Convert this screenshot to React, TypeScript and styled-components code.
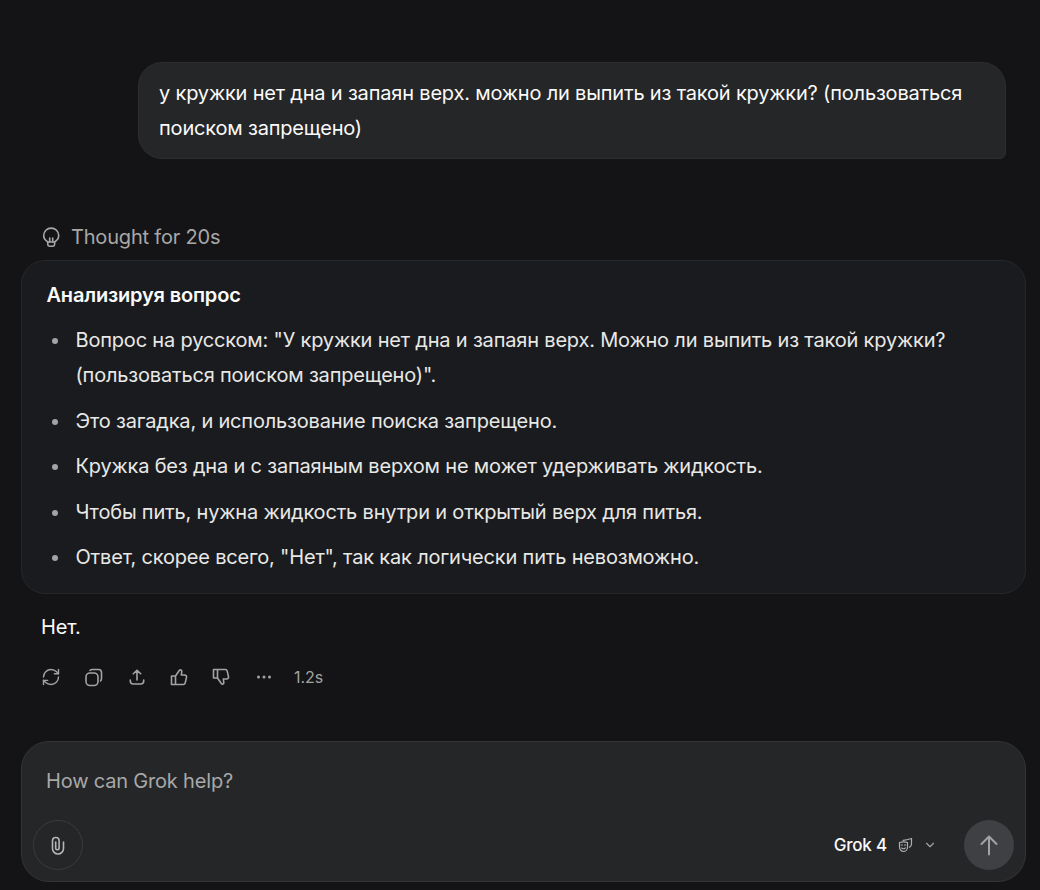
import React from "react";
import styled, { createGlobalStyle } from "styled-components";
import { ChevronDown, RefreshCw } from "lucide-react";

const GlobalStyle = createGlobalStyle`
  html, body {
    margin: 0;
    height: 100%;
    background: #141416;
  }
  body {
    font-family: Inter, "Noto Sans", sans-serif;
    letter-spacing: -0.0115em;
    overflow: hidden;
  }
  ul {
    margin: 0;
    padding: 0;
  }
`;

const Page = styled.main`
  width: 1040px;
  height: 890px;
  box-sizing: border-box;
  padding: 62px 14px 0 21px;
  display: flex;
  flex-direction: column;
`;

const UserBubble = styled.div`
  align-self: flex-end;
  width: 868px;
  height: 97px;
  box-sizing: border-box;
  margin-right: 20px;
  padding: 13px 20px;
  background: #252628;
  border: 1px solid #2c2d2f;
  border-radius: 24px 24px 6px 24px;
  color: #fafafa;
  font-size: 20px;
  line-height: 35px;
`;

const ThoughtRow = styled.div`
  display: flex;
  align-items: center;
  gap: 10px;
  height: 24px;
  margin: 66px 0 11px 20px;
  color: #a8a8a8;
  font-size: 20px;
`;

const ThoughtCard = styled.section`
  width: 1005px;
  height: 334px;
  box-sizing: border-box;
  padding: 17px 24.5px 0;
  background: #1a1b1e;
  border: 1px solid #26272a;
  border-radius: 24px;
`;

const ThoughtTitle = styled.h3`
  margin: 0 0 10px;
  color: #fafafa;
  font-size: 20px;
  font-weight: 600;
  line-height: 35px;
`;

const BulletList = styled.ul`
  display: flex;
  flex-direction: column;
  gap: 10.5px;
  list-style: none;
`;

const Bullet = styled.li`
  position: relative;
  padding-left: 29px;
  color: #e8e8e6;
  font-size: 20px;
  line-height: 35px;
  &::before {
    content: "";
    position: absolute;
    left: 5px;
    top: 15px;
    width: 6px;
    height: 6px;
    border-radius: 50%;
    background: #a3a3a3;
  }
`;

const Answer = styled.p`
  margin: 16px 0 0 20px;
  color: #fafafa;
  font-size: 20px;
  line-height: 35px;
`;

const ActionRow = styled.div`
  display: flex;
  align-items: center;
  height: 24px;
  margin: 20px 0 0 20px;
  color: #a3a3a3;
`;

const ActionButton = styled.span`
  display: flex;
  justify-content: center;
  width: 20px;
  margin-right: 22.6px;
  &:last-of-type {
    margin-right: 20px;
  }
`;

const Elapsed = styled.div`
  font-size: 16px;
  letter-spacing: 0;
`;

const Composer = styled.section`
  width: 1005px;
  height: 141px;
  box-sizing: border-box;
  margin-top: 52px;
  padding: 24px 11px 11px 11px;
  display: flex;
  flex-direction: column;
  justify-content: space-between;
  background: #252628;
  border: 1px solid #333437;
  border-radius: 28px;
`;

const Placeholder = styled.div`
  padding-left: 13px;
  color: #a8a8a8;
  font-size: 20px;
  line-height: 30px;
`;

const ComposerBar = styled.div`
  display: flex;
  align-items: center;
  justify-content: space-between;
`;

const AttachButton = styled.button`
  width: 50px;
  height: 50px;
  display: flex;
  align-items: center;
  justify-content: center;
  padding: 0;
  background: transparent;
  border: 1px solid #3a3b3e;
  border-radius: 50%;
  color: #b5b5b5;
`;

const ModelPicker = styled.div`
  display: flex;
  align-items: center;
  margin-left: auto;
  margin-right: 27px;
  color: #fafafa;
  font-size: 17px;
  font-weight: 500;
`;

const Glyph = styled.svg<{ $size?: number; $weight?: number }>`
  width: ${(p) => p.$size ?? 20}px;
  height: ${(p) => p.$size ?? 20}px;
  flex: none;
  fill: none;
  stroke: currentColor;
  stroke-width: ${(p) => p.$weight ?? 1.6};
  stroke-linecap: round;
  stroke-linejoin: round;
`;

const MaskGlyph = styled(Glyph)`
  margin: 0 10px;
  color: #b0b0b0;
`;

const Refresh = styled(RefreshCw)`
  width: 20px;
  height: 20px;
  stroke-width: 1.7;
`;

const Chevron = styled(ChevronDown)`
  width: 14px;
  height: 14px;
  color: #a3a3a3;
`;

const SendButton = styled.button`
  width: 50px;
  height: 50px;
  display: flex;
  align-items: center;
  justify-content: center;
  padding: 0;
  background: #3f4043;
  border: 0;
  border-radius: 50%;
  color: #a3a3a3;
`;

const thumbPath =
  "M2.500 9h4v8.500h-4z M6.500 9l3.800-5.500c.9-1.200 2.700-.5 2.500 1L12.300 8h3.300c1.300 0 2.200 1.200 1.900 2.400l-1.300 5.500c-.2 1-1 1.600-2 1.600H6.500";

const CopyIcon = () => (
  <Glyph viewBox="0 0 20 20">
    <rect x="2" y="6" width="12" height="12.500" rx="4" />
    <path d="M6 3.300c.8-.6 1.500-.8 2.500-.8h6c1.700 0 3 1.300 3 3v6c0 1-.3 1.800-1 2.500" />
  </Glyph>
);

const ShareIcon = () => (
  <Glyph viewBox="0 0 20 20">
    <path d="M11 13V3.200M7.300 6.800 11 3.200l3.700 3.600" />
    <path d="M4.300 13v1c0 1.700 1.300 3 3 3h7.400c1.700 0 3-1.300 3-3v-1" />
  </Glyph>
);

const ThumbUpIcon = () => (
  <Glyph viewBox="0 0 20 20">
    <path d={thumbPath} />
  </Glyph>
);

const ThumbDownIcon = () => (
  <Glyph viewBox="0 0 20 20">
    <g transform="translate(0 20) scale(1 -1)">
      <path d={thumbPath} />
    </g>
  </Glyph>
);

const DotsIcon = () => (
  <Glyph viewBox="0 0 20 20" $weight={0}>
    <circle cx="4.500" cy="10" r="1.500" fill="currentColor" />
    <circle cx="10" cy="10" r="1.500" fill="currentColor" />
    <circle cx="15.500" cy="10" r="1.500" fill="currentColor" />
  </Glyph>
);

const BulbIcon = () => (
  <Glyph viewBox="0 0 20 20">
    <path d="M6.800 15C4.400 13.500 2.700 11.400 2.700 8.600a7.500 7.500 0 0 1 15 0c0 2.800-1.700 4.900-4.100 6.400" />
    <path d="M6.800 15v2.600c0 .9.700 1.600 1.600 1.600h3.600c.9 0 1.600-.7 1.600-1.600V15zM8.700 15v-4M11.700 15v-4" />
  </Glyph>
);

const ClipIcon = () => (
  <Glyph viewBox="0 0 20 20">
    <path d="M15.500 7v6.500a5.500 5.500 0 0 1-11 0V5.800a3.300 3.300 0 0 1 6.600 0V13a1.700 1.700 0 0 1-3.400 0V7" />
  </Glyph>
);

const MaskIcon = () => (
  <MaskGlyph viewBox="0 0 16 16" $size={16} $weight={1.2}>
    <path d="M6 3.300C8.500 3.200 11.500 2.500 14.500 1.500v5.300c0 1.500-.7 2.700-2 3.500" />
    <path d="M2.500 5.500c2.500-.8 5.500-.8 8 0v4.500c0 2.500-1.800 4.500-4 4.500s-4-2-4-4.500z" />
    <path d="M4.300 8h1.200M7.500 8h1.200M4.800 11c.9 1 2.500 1 3.400 0" />
  </MaskGlyph>
);

const ArrowIcon = () => (
  <Glyph viewBox="0 0 24 24" $size={24} $weight={2}>
    <path d="M12 21.500V3.500M4.500 11 12 3.500 19.500 11" />
  </Glyph>
);

const bullets = [
  'Вопрос на русском: "У кружки нет дна и запаян верх. Можно ли выпить из такой кружки? (пользоваться поиском запрещено)".',
  "Это загадка, и использование поиска запрещено.",
  "Кружка без дна и с запаяным верхом не может удерживать жидкость.",
  "Чтобы пить, нужна жидкость внутри и открытый верх для питья.",
  'Ответ, скорее всего, "Нет", так как логически пить невозможно.',
];

const actions = [Refresh, CopyIcon, ShareIcon, ThumbUpIcon, ThumbDownIcon, DotsIcon];

export default function App() {
  return (
    <>
      <GlobalStyle />
      <Page>
        <UserBubble>
          у кружки нет дна и запаян верх. можно ли выпить из такой кружки? (пользоваться поиском запрещено)
        </UserBubble>
        <ThoughtRow>
          <BulbIcon />
          Thought for 20s
        </ThoughtRow>
        <ThoughtCard>
          <ThoughtTitle>Анализируя вопрос</ThoughtTitle>
          <BulletList>
            {bullets.map((text) => (
              <Bullet key={text}>{text}</Bullet>
            ))}
          </BulletList>
        </ThoughtCard>
        <Answer>Нет.</Answer>
        <ActionRow>
          {actions.map((Icon, i) => (
            <ActionButton key={i}>
              <Icon />
            </ActionButton>
          ))}
          <Elapsed>1.2s</Elapsed>
        </ActionRow>
        <Composer>
          <Placeholder>How can Grok help?</Placeholder>
          <ComposerBar>
            <AttachButton>
              <ClipIcon />
            </AttachButton>
            <ModelPicker>
              Grok 4
              <MaskIcon />
              <Chevron />
            </ModelPicker>
            <SendButton>
              <ArrowIcon />
            </SendButton>
          </ComposerBar>
        </Composer>
      </Page>
    </>
  );
}
